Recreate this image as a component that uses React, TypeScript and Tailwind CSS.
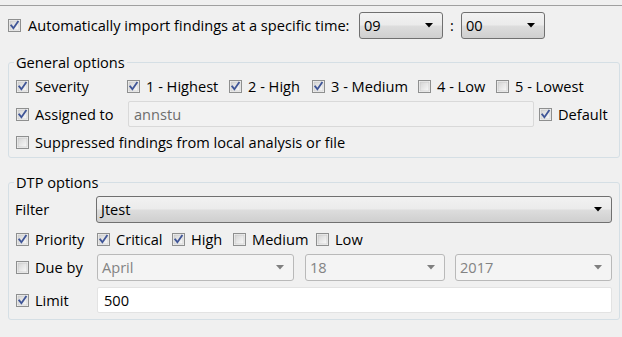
import React from "react";

const FONT = "font-['Open_Sans','Noto_Sans',sans-serif] text-[14.6px] leading-none";

function Check({ checked }: { checked: boolean }) {
  return (
    <svg width="13" height="13" viewBox="0 0 13 13" className="shrink-0 block">
      <defs>
        <linearGradient id="cbg" x1="0" y1="0" x2="1" y2="1">
          <stop offset="0" stopColor="#d4d4d4" />
          <stop offset="1" stopColor="#fafafa" />
        </linearGradient>
      </defs>
      <rect x="0.5" y="0.5" width="12" height="12" fill="#f4f4f4" stroke="#8e8f8f" />
      <rect x="2" y="2" width="9" height="9" fill="url(#cbg)" stroke="#c4c4c4" strokeWidth="0.6" />
      {checked && (
        <path d="M3.2 6.4 L5.4 9.3 L9.9 2.8" fill="none" stroke="#3f5597" strokeWidth="1.8" strokeLinecap="square" />
      )}
    </svg>
  );
}

function CB({ checked, label, w }: { checked: boolean; label: string; w?: string }) {
  return (
    <div className={`flex items-center gap-[6px] shrink-0 ${w ?? ""}`}>
      <Check checked={checked} />
      <span className="whitespace-nowrap">{label}</span>
    </div>
  );
}

function Arrow({ disabled }: { disabled?: boolean }) {
  return (
    <svg width="8" height="5" viewBox="0 0 8 5" className="block shrink-0">
      <path d="M0 0 H8 L4 4.5 Z" fill={disabled ? "#7f7f7f" : "#000"} />
    </svg>
  );
}

function Combo({ value, w, disabled }: { value: string; w: string; disabled?: boolean }) {
  if (disabled) {
    return (
      <div className={`${w} h-[27px] shrink-0 rounded-[3px] border border-[#b9b9b9] bg-[#f4f4f4] flex items-center pl-[4px] pr-[9px] text-[#838383]`}>
        <span className="flex-1">{value}</span>
        <Arrow disabled />
      </div>
    );
  }
  return (
    <div className={`${w} h-[27px] shrink-0 rounded-[3px] border border-[#707070] bg-[linear-gradient(#f2f2f2_0%,#ebebeb_48%,#dddddd_52%,#cfcfcf_100%)] flex items-center pl-[4px] pr-[9px] text-black`}>
      <span className="flex-1">{value}</span>
      <Arrow />
    </div>
  );
}

export default function App() {
  return (
    <div className={`w-[622px] h-[337px] bg-[#f0f0f0] text-black ${FONT} overflow-hidden`}>
      <div className="h-[5px]" />
      <div className="border-t border-[#a0a0a0]" />
      <div className="flex items-center h-[27px] mt-[6px] pl-[8px]">
        <div className="w-[351px] flex items-center gap-[7px]">
          <Check checked />
          <span className="whitespace-nowrap">Automatically import findings at a specific time:</span>
        </div>
        <Combo value="09" w="w-[84px]" />
        <span className="w-[18px] text-center">:</span>
        <Combo value="00" w="w-[84px]" />
      </div>

      <fieldset className="mx-[8px] mt-[13px] w-[612px] rounded-[3px] border border-[#d5dfe5] pl-[7px] pr-[7px] pb-[1px]">
        <legend className="-ml-[2px] px-[2px] h-[20px] leading-[20px]">General options</legend>
        <div className="h-[28px] flex items-center">
          <CB checked label="Severity" w="w-[111px]" />
          <CB checked label="1 - Highest" w="w-[102px]" />
          <CB checked label="2 - High" w="w-[83px]" />
          <CB checked label="3 - Medium" w="w-[106px]" />
          <CB checked={false} label="4 - Low" w="w-[78px]" />
          <CB checked={false} label="5 - Lowest" />
        </div>
        <div className="h-[28px] flex items-center">
          <CB checked label="Assigned to" w="w-[112px]" />
          <div className="w-[406px] h-[26px] border border-[#d9d9d9] bg-[#f2f2f2] rounded-[2px] flex items-center pl-[5px] text-[#6d6d6d]">annstu</div>
          <div className="w-[5px]" />
          <CB checked label="Default" />
        </div>
        <div className="h-[28px] flex items-center">
          <CB checked={false} label="Suppressed findings from local analysis or file" />
        </div>
      </fieldset>

      <fieldset className="mx-[8px] mt-[14px] w-[612px] rounded-[3px] border border-[#d5dfe5] pl-[7px] pr-[7px] pb-[6px]">
        <legend className="-ml-[2px] px-[2px] h-[20px] leading-[20px]">DTP options</legend>
        <div className="flex items-center h-[27px] mt-[4px]">
          <span className="w-[81px] -ml-[1px] pl-0">Filter</span>
          <Combo value="Jtest" w="flex-1" />
        </div>
        <div className="flex items-center h-[20px] mt-[6px]">
          <CB checked label="Priority" w="w-[81px]" />
          <CB checked label="Critical" w="w-[75px]" />
          <CB checked label="High" w="w-[61px]" />
          <CB checked={false} label="Medium" w="w-[83px]" />
          <CB checked={false} label="Low" />
        </div>
        <div className="flex items-center h-[27px] mt-[5px]">
          <CB checked={false} label="Due by" w="w-[81px]" />
          <Combo value="April" w="w-[197px]" disabled />
          <div className="w-[11px]" />
          <Combo value="18" w="w-[140px]" disabled />
          <div className="w-[10px]" />
          <Combo value="2017" w="flex-1" disabled />
        </div>
        <div className="flex items-center h-[26px] mt-[6px]">
          <CB checked label="Limit" w="w-[81px]" />
          <div className="flex-1 h-[26px] border border-[#e3e3e3] bg-white rounded-[2px] flex items-center pl-[6px]">500</div>
        </div>
      </fieldset>
    </div>
  );
}
